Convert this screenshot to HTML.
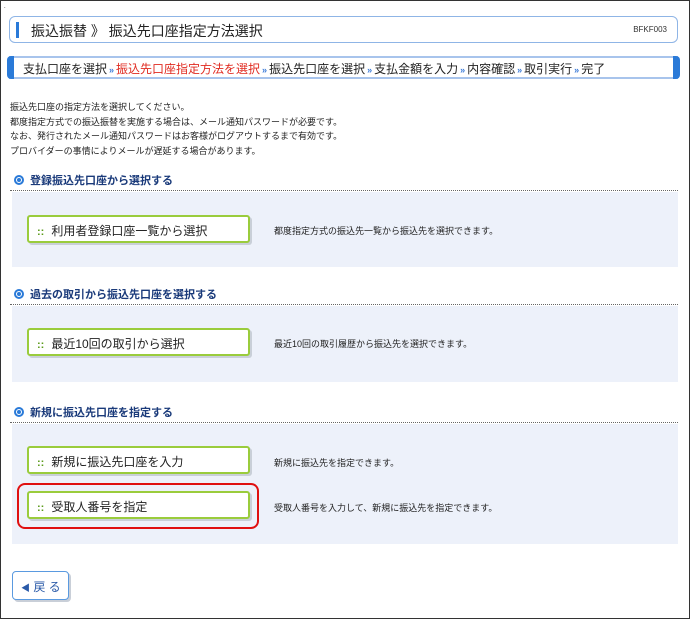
<!DOCTYPE html>
<html><head><meta charset="utf-8"><style>
*{margin:0;padding:0;box-sizing:border-box}
body{width:691px;height:620px;background:#fff;position:relative;overflow:hidden;font-family:"Liberation Sans","Noto Sans CJK JP",sans-serif;color:#222}
.frame{position:absolute;left:0;top:0;width:690px;height:619px;border:1px solid #333}
.abs{position:absolute}
.title{left:9px;top:16px;width:669px;height:27px;border:1px solid #8fb5e6;border-radius:6px}
.title .bar{position:absolute;left:6px;top:5px;width:3px;height:16px;background:#2a7ad8}
.title .t{position:absolute;left:21px;top:4px;font-size:14px;color:#222}
.title .c{position:absolute;right:10px;top:8px;font-size:8px;color:#333}
.steps{left:9px;top:56px;width:669px;height:23px;border:2px solid #a8c4ec;border-left:none;border-right:none;background:#fff}
.cap{position:absolute;top:-2px;width:7px;height:23px;background:#2a7ad8}
.steps .t{position:absolute;left:14px;top:2px;font-size:12px;white-space:nowrap;color:#222}
.steps .t b{color:#3a7ad8;font-size:9px;font-weight:bold;margin:0 2px}
.steps .t .r{color:#e02a20}
.intro{left:10px;top:100px;font-size:9px;line-height:14.5px}
.sh{font-size:11px;font-weight:bold;color:#1a3a7a;left:14px}
.sh i{display:inline-block;width:10px;height:10px;border:2px solid #2a7ad8;border-radius:50%;vertical-align:-1px;margin-right:6px;position:relative}
.sh i:after{content:"";position:absolute;left:1px;top:1px;width:4px;height:4px;background:#2a7ad8;border-radius:50%}
.dot{left:10px;width:668px;border-top:1px dotted #666}
.panel{left:12px;width:666px;background:#edf1fa}
.btn{width:223px;height:28px;background:#fff;border:2px solid #9acc3c;border-radius:3px;box-shadow:2px 2px 0 #c9cfd8;font-size:12px;padding:5px 0 0 8px;white-space:nowrap}
.btn span{color:#5a9a18;font-weight:bold;font-size:11px;margin-right:7px}
.desc{left:274px;font-size:9px}
</style></head><body>
<div class="frame"></div>
<div class="abs" style="left:4px;top:4px;font-size:6px">.</div>
<div class="abs title"><div class="bar"></div><div class="t">振込振替 》 振込先口座指定方法選択</div><div class="c">BFKF003</div></div>
<div class="abs steps"><div class="cap" style="left:-2px;border-radius:4px 0 0 4px"></div><div class="cap" style="right:-2px;border-radius:0 4px 4px 0"></div>
<div class="t">支払口座を選択<b>»</b><span class="r">振込先口座指定方法を選択</span><b>»</b>振込先口座を選択<b>»</b>支払金額を入力<b>»</b>内容確認<b>»</b>取引実行<b>»</b>完了</div></div>
<div class="abs intro">振込先口座の指定方法を選択してください。<br>都度指定方式での振込振替を実施する場合は、メール通知パスワードが必要です。<br>なお、発行されたメール通知パスワードはお客様がログアウトするまで有効です。<br>プロバイダーの事情によりメールが遅延する場合があります。</div>

<div class="abs sh" style="top:172px"><i></i>登録振込先口座から選択する</div>
<div class="abs dot" style="top:190px"></div>
<div class="abs panel" style="top:192px;height:75px"></div>
<div class="abs btn" style="left:27px;top:215px"><span>::</span>利用者登録口座一覧から選択</div>
<div class="abs desc" style="top:224px">都度指定方式の振込先一覧から振込先を選択できます。</div>

<div class="abs sh" style="top:286px"><i></i>過去の取引から振込先口座を選択する</div>
<div class="abs dot" style="top:304px"></div>
<div class="abs panel" style="top:306px;height:76px"></div>
<div class="abs btn" style="left:27px;top:328px"><span>::</span>最近10回の取引から選択</div>
<div class="abs desc" style="top:337px">最近10回の取引履歴から振込先を選択できます。</div>

<div class="abs sh" style="top:404px"><i></i>新規に振込先口座を指定する</div>
<div class="abs dot" style="top:422px"></div>
<div class="abs panel" style="top:424px;height:120px"></div>
<div class="abs btn" style="left:27px;top:446px"><span>::</span>新規に振込先口座を入力</div>
<div class="abs desc" style="top:456px">新規に振込先を指定できます。</div>
<div class="abs" style="left:17px;top:483px;width:242px;height:46px;border:2px solid #e01010;border-radius:8px"></div>
<div class="abs btn" style="left:27px;top:491px"><span>::</span>受取人番号を指定</div>
<div class="abs desc" style="top:501px">受取人番号を入力して、新規に振込先を指定できます。</div>

<div class="abs" style="left:12px;top:571px;width:57px;height:29px;border:1px solid #5a9ae0;border-radius:4px;box-shadow:2px 2px 0 #c9cfd8;background:#fff;font-size:12px;color:#2a5aa8;padding:6px 0 0 8px"><span style="font-size:9px">◀</span> 戻 る</div>
</body></html>
